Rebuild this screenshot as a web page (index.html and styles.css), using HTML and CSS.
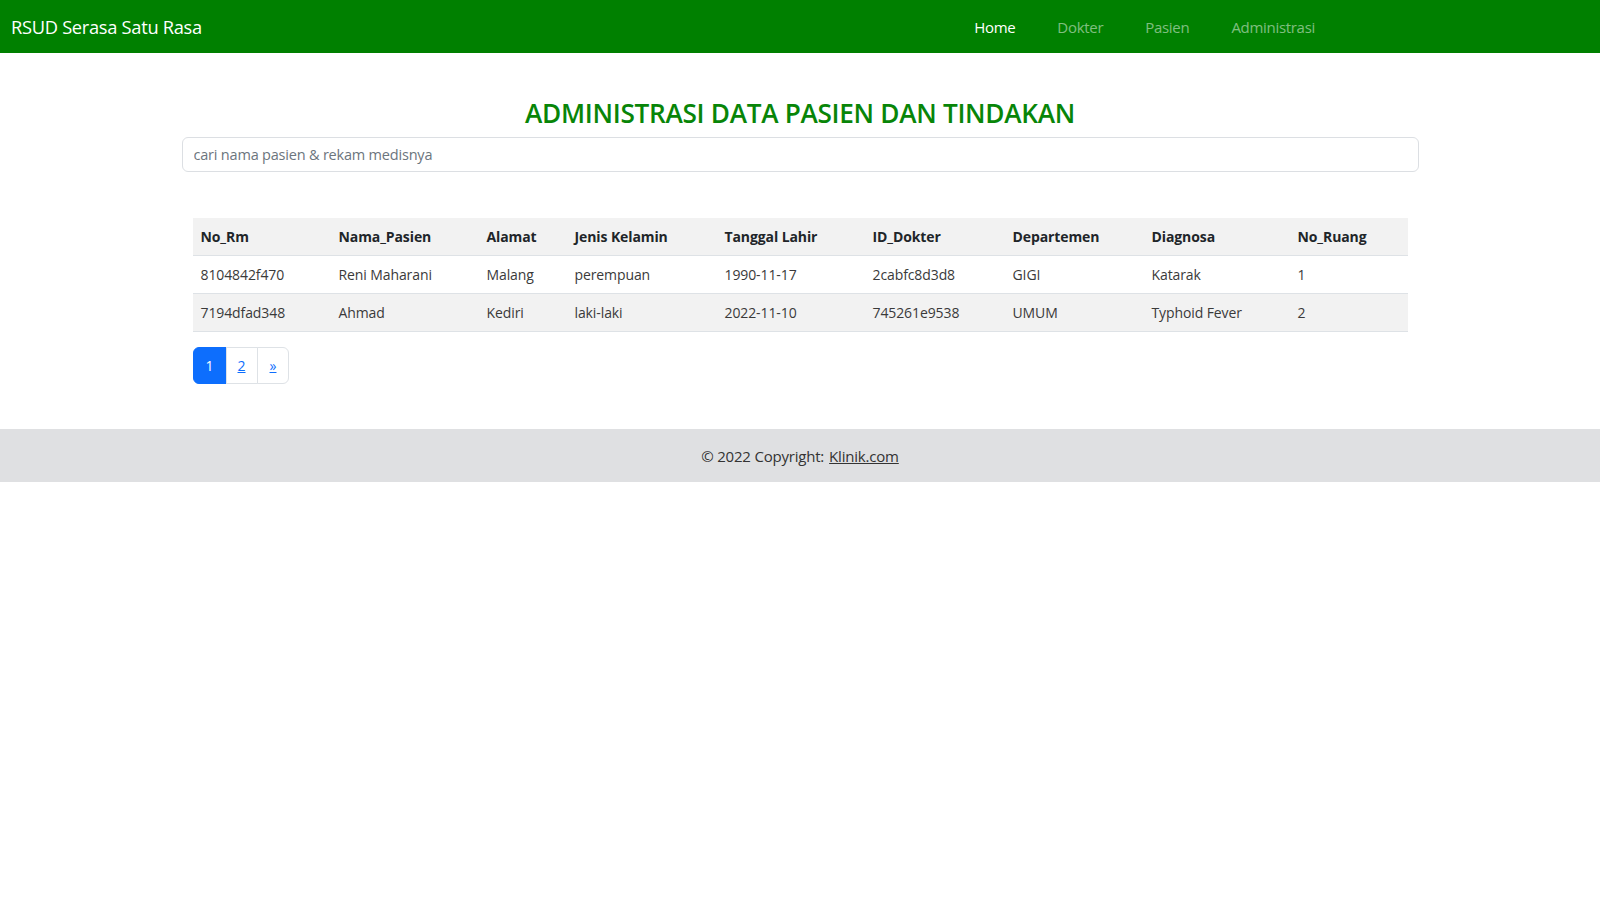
FILE: index.html
```html
<!DOCTYPE html>
<html lang="id">
<head>
<meta charset="utf-8">
<title>RSUD Serasa Satu Rasa</title>
<link rel="stylesheet" href="styles.css">
</head>
<body>
<nav class="navbar">
  <a class="brand" href="#">RSUD Serasa Satu Rasa</a>
  <ul class="nav">
    <li><a class="nav-link active" href="#">Home</a></li>
    <li><a class="nav-link" href="#">Dokter</a></li>
    <li><a class="nav-link" href="#">Pasien</a></li>
    <li><a class="nav-link" href="#">Administrasi</a></li>
  </ul>
</nav>

<main class="container">
  <h3 class="title">ADMINISTRASI DATA PASIEN DAN TINDAKAN</h3>
  <input class="search" type="text" placeholder="cari nama pasien &amp; rekam medisnya">

  <div class="table-wrap">
    <table class="data">
      <colgroup>
        <col class="c1"><col class="c2"><col class="c3"><col class="c4"><col class="c5"><col class="c6"><col class="c7"><col class="c8"><col class="c9">
      </colgroup>
      <thead>
        <tr>
          <th>No_Rm</th><th>Nama_Pasien</th><th>Alamat</th><th>Jenis Kelamin</th><th>Tanggal Lahir</th><th>ID_Dokter</th><th>Departemen</th><th>Diagnosa</th><th>No_Ruang</th>
        </tr>
      </thead>
      <tbody>
        <tr>
          <td>8104842f470</td><td>Reni Maharani</td><td>Malang</td><td>perempuan</td><td>1990-11-17</td><td>2cabfc8d3d8</td><td>GIGI</td><td>Katarak</td><td>1</td>
        </tr>
        <tr class="striped">
          <td>7194dfad348</td><td>Ahmad</td><td>Kediri</td><td>laki-laki</td><td>2022-11-10</td><td>745261e9538</td><td>UMUM</td><td>Typhoid Fever</td><td>2</td>
        </tr>
      </tbody>
    </table>

    <ul class="pagination">
      <li><a class="page active" href="#">1</a></li>
      <li><a class="page" href="#">2</a></li>
      <li><a class="page" href="#">&raquo;</a></li>
    </ul>
  </div>
</main>

<footer class="footer">
  © 2022 Copyright: <a href="#">Klinik.com</a>
</footer>
</body>
</html>
```

FILE: styles.css
```css
* { box-sizing: border-box; }

body {
  margin: 0;
  font-family: "Open Sans", "Noto Sans", sans-serif;
  color: #212529;
  background: #fff;
}

.navbar {
  height: 53px;
  background: #008000;
  display: flex;
  align-items: center;
  padding: 0 11px;
}

.brand {
  color: #fff;
  text-decoration: none;
  font-size: 18.3px;
  letter-spacing: -0.3px;
}

.nav {
  list-style: none;
  margin: 0 253px 0 auto;
  padding: 0;
  display: flex;
}

.nav-link {
  display: block;
  padding: 8px 21px;
  color: rgba(255, 255, 255, 0.5);
  text-decoration: none;
  font-size: 15px;
  letter-spacing: -0.3px;
}

.nav-link.active { color: #fff; }

.container {
  width: 1237px;
  margin: 0 auto;
  padding-top: 43px;
}

.title {
  margin: 0 0 7px;
  text-align: center;
  color: #088508;
  font-size: 26.2px;
  font-weight: 600;
  line-height: 34px;
  letter-spacing: -0.3px;
}

.search {
  display: block;
  width: 100%;
  height: 35px;
  padding: 0 11px;
  border: 1px solid #dcdfe3;
  border-radius: 6px;
  font-family: inherit;
  font-size: 14.5px;
  color: #212529;
  letter-spacing: -0.2px;
}

.search::placeholder { color: #6c757d; }

.table-wrap {
  padding: 46px 11px 0 11px;
}

.data {
  width: 1215px;
  border-collapse: collapse;
  table-layout: fixed;
  font-size: 14px;
  letter-spacing: -0.1px;
}

.c1 { width: 138px; }
.c2 { width: 148px; }
.c3 { width: 88px; }
.c4 { width: 150px; }
.c5 { width: 148px; }
.c6 { width: 140px; }
.c7 { width: 139px; }
.c8 { width: 146px; }
.c9 { width: 118px; }

.data th,
.data td {
  text-align: left;
  padding: 8px 8px;
  line-height: 21px;
  border-bottom: 1px solid #dee2e6;
  white-space: nowrap;
}

.data th {
  font-weight: 700;
  background: #f2f2f2;
  color: #212529;
}

.data td { color: #3a3a3a; }

.data tr.striped td { background: #f2f2f2; }

.pagination {
  list-style: none;
  margin: 15px 0 0;
  padding: 0;
  display: flex;
}

.page {
  display: block;
  height: 37px;
  line-height: 35px;
  padding: 0 11px;
  border: 1px solid #dee2e6;
  margin-left: -1px;
  color: #0d6efd;
  font-size: 14px;
  text-decoration: underline;
  background: #fff;
}

.pagination li:first-child .page {
  margin-left: 0;
  border-radius: 6px 0 0 6px;
  padding: 0 12px;
}

.pagination li:last-child .page {
  border-radius: 0 6px 6px 0;
  padding: 0 12px;
}

.page.active {
  background: #0d6efd;
  border-color: #0d6efd;
  color: #fff;
  text-decoration: none;
}

.footer {
  margin-top: 45px;
  height: 53px;
  background: #dfe0e2;
  display: flex;
  align-items: center;
  justify-content: center;
  font-size: 15px;
  color: #333;
  letter-spacing: -0.2px;
}

.footer a {
  color: #333;
  margin-left: 5px;
  text-decoration: underline;
}
```
